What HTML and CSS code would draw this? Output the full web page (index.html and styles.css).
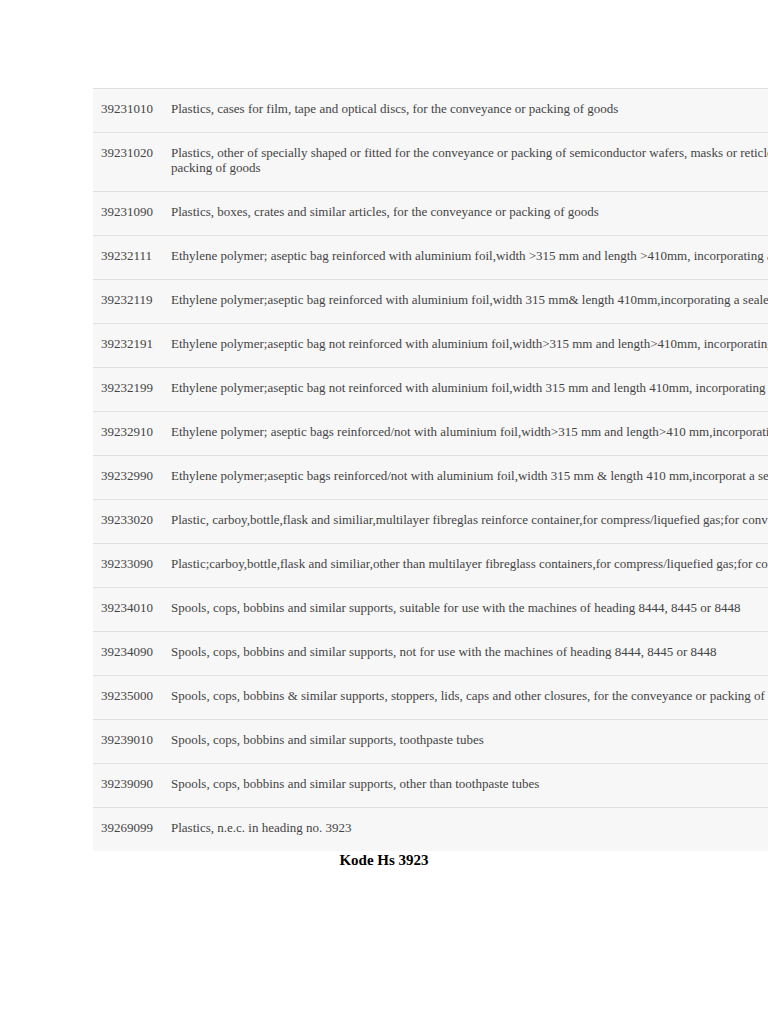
FILE: index.html
```html
<!DOCTYPE html>
<html>
<head>
    <title>Kode Hs 3923</title>
    <link rel="stylesheet" href="styles.css">
</head>
<body>
    <div class="page">
        <table class="hs-table">
            <tr><td class="kode">39231010</td><td class="uraian">Plastics, cases for film, tape and optical discs, for the conveyance or packing of goods</td></tr>
            <tr><td class="kode">39231020</td><td class="uraian">Plastics, other of specially shaped or fitted for the conveyance or packing of semiconductor wafers, masks or reticles, for the conveyance or packing of goods</td></tr>
            <tr><td class="kode">39231090</td><td class="uraian">Plastics, boxes, crates and similar articles, for the conveyance or packing of goods</td></tr>
            <tr><td class="kode">39232111</td><td class="uraian">Ethylene polymer; aseptic bag reinforced with aluminium foil,width &gt;315 mm and length &gt;410mm, incorporating a sealed gland</td></tr>
            <tr><td class="kode">39232119</td><td class="uraian">Ethylene polymer;aseptic bag reinforced with aluminium foil,width 315 mm&amp; length 410mm,incorporating a sealed gland</td></tr>
            <tr><td class="kode">39232191</td><td class="uraian">Ethylene polymer;aseptic bag not reinforced with aluminium foil,width&gt;315 mm and length&gt;410mm, incorporating sealed gland</td></tr>
            <tr><td class="kode">39232199</td><td class="uraian">Ethylene polymer;aseptic bag not reinforced with aluminium foil,width 315 mm and length 410mm, incorporating sealed gland</td></tr>
            <tr><td class="kode">39232910</td><td class="uraian">Ethylene polymer; aseptic bags reinforced/not with aluminium foil,width&gt;315 mm and length&gt;410 mm,incorporating sealed gland</td></tr>
            <tr><td class="kode">39232990</td><td class="uraian">Ethylene polymer;aseptic bags reinforced/not with aluminium foil,width 315 mm &amp; length 410 mm,incorporat a sealed gland</td></tr>
            <tr><td class="kode">39233020</td><td class="uraian">Plastic, carboy,bottle,flask and similiar,multilayer fibreglas reinforce container,for compress/liquefied gas;for conveyance</td></tr>
            <tr><td class="kode">39233090</td><td class="uraian">Plastic;carboy,bottle,flask and similiar,other than multilayer fibreglass containers,for compress/liquefied gas;for conveyance</td></tr>
            <tr><td class="kode">39234010</td><td class="uraian">Spools, cops, bobbins and similar supports, suitable for use with the machines of heading 8444, 8445 or 8448</td></tr>
            <tr><td class="kode">39234090</td><td class="uraian">Spools, cops, bobbins and similar supports, not for use with the machines of heading 8444, 8445 or 8448</td></tr>
            <tr><td class="kode">39235000</td><td class="uraian">Spools, cops, bobbins &amp; similar supports, stoppers, lids, caps and other closures, for the conveyance or packing of goods</td></tr>
            <tr><td class="kode">39239010</td><td class="uraian">Spools, cops, bobbins and similar supports, toothpaste tubes</td></tr>
            <tr><td class="kode">39239090</td><td class="uraian">Spools, cops, bobbins and similar supports, other than toothpaste tubes</td></tr>
            <tr><td class="kode">39269099</td><td class="uraian">Plastics, n.e.c. in heading no. 3923</td></tr>
        </table>
        <h2 class="judul">Kode Hs 3923</h2>
    </div>
</body>
</html>
```

FILE: styles.css
```css
html, body {
    overflow-x: hidden;
}
body {
    margin: 0;
    background-color: #fff;
    font-family: "Liberation Serif", "Times New Roman", serif;
    color: #333;
}
.page {
    padding-top: 88px;
}
.hs-table {
    margin-left: 93px;
    width: 814px;
    border-collapse: collapse;
    font-size: 13px;
}
.hs-table tr {
    background-color: #f7f7f7;
    border-top: 1px solid #e0e0e0;
}
.hs-table td {
    vertical-align: top;
    padding: 12px 8px 16px 8px;
    line-height: 15px;
}
.kode {
    width: 54px;
    color: #444;
}
.uraian {
    color: #444;
}
.judul {
    margin: 1px 0 0 0;
    text-align: center;
    font-size: 15px;
    line-height: 17px;
    color: #000;
}
```
